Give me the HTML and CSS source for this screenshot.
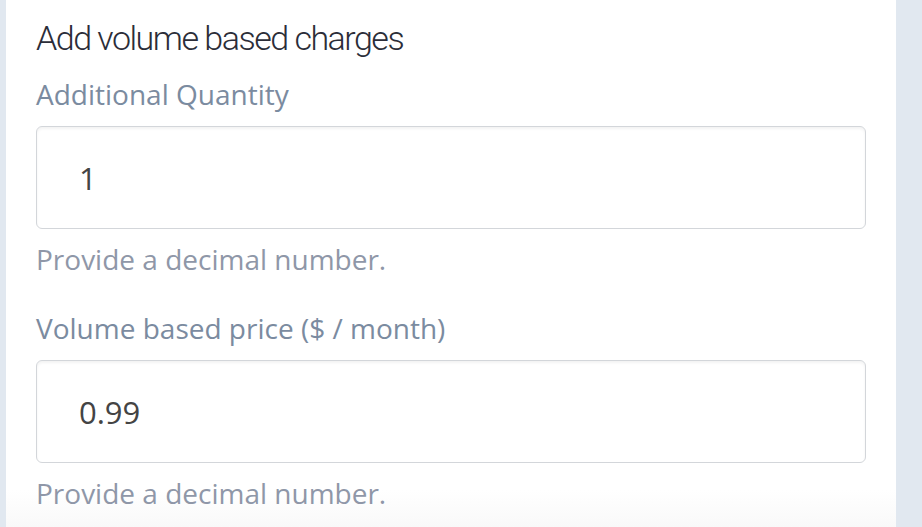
FILE: index.html
```html
<!DOCTYPE html>
<html>
<head>
<meta charset="utf-8">
<link rel="stylesheet" href="styles.css">
</head>
<body>
<div class="page">
  <div class="strip-left"></div>
  <div class="panel">
    <h2 class="title">Add volume based charges</h2>
    <div class="field">
      <label class="label">Additional Quantity</label>
      <div class="input">1</div>
      <div class="help">Provide a decimal number.</div>
    </div>
    <div class="field field-next">
      <label class="label">Volume based price ($ / month)</label>
      <div class="input">0.99</div>
      <div class="help">Provide a decimal number.</div>
    </div>
  </div>
  <div class="strip-right"></div>
</div>
</body>
</html>
```
FILE: styles.css
```css
html, body {
  margin: 0;
  padding: 0;
  height: 100%;
  background: #e1e8f0;
}
.page {
  display: flex;
  height: 527px;
  overflow: hidden;
}
.strip-left {
  width: 6px;
  background: #e1e8f0;
}
.strip-right {
  width: 26px;
  background: #e1e8f0;
}
.panel {
  flex: 1;
  background: linear-gradient(to bottom, #ffffff 0, #ffffff 490px, #f9f9f9 527px);
  padding: 0 30px;
  font-family: "Open Sans", sans-serif;
}
.title {
  margin: 0;
  padding-top: 18px;
  font-family: Roboto, sans-serif;
  font-weight: 300;
  font-size: 34px;
  line-height: 40px;
  color: #2b2d38;
  letter-spacing: -1.5px;
}
.field {
  display: flex;
  flex-direction: column;
  margin-top: 18px;
}
.field-next {
  margin-top: 33px;
}
.label {
  display: block;
  font-size: 28px;
  line-height: 36px;
  color: #7b8ba0;
}
.input {
  margin-top: 14px;
  height: 103px;
  box-sizing: border-box;
  border: 1px solid #d3d6da;
  border-radius: 6px;
  box-shadow: inset 0 2px 3px rgba(0,0,0,0.05);
  padding-left: 42px;
  display: flex;
  align-items: center;
  font-size: 31px;
  color: #444;
  background: #fff;
}
.help {
  margin-top: 12px;
  font-size: 28px;
  line-height: 36px;
  color: #8f97a8;
}
```
